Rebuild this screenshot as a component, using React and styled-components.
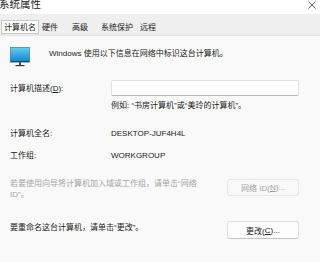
import * as React from 'react';
import styled, { createGlobalStyle } from 'styled-components';

// =====================================
// STYLED COMPONENTS
// =====================================

const GlobalStyle = createGlobalStyle`
  html, body {
    margin: 0;
    padding: 0;
    background: #ffffff;
  }
  body {
    font-family: "Liberation Sans", "Noto Sans CJK SC", sans-serif;
    color: #1b1b1b;
  }
`;

const Window = styled.div`
  display: flex;
  flex-direction: column;
  width: 320px;
  height: 262px;
  overflow: hidden;
  font-size: 8px;
`;

const TitleBar = styled.div`
  display: flex;
  justify-content: space-between;
  align-items: flex-start;
  height: 14px;
  background: #ffffff;
`;

const Title = styled.div`
  font-size: 10.5px;
  line-height: 10px;
  margin-top: -1px;
  margin-left: -1px;
  color: #222;
`;

const CloseButton = styled.div`
  width: 10px;
  height: 10px;
  margin: 0 3px 0 0;
  display: flex;
  align-items: center;
  justify-content: center;
`;

const TabStrip = styled.div`
  display: flex;
  align-items: flex-end;
  height: 21px;
  padding-left: 1px;
  background: #efefef;
`;

const Tab = styled.div`
  box-sizing: border-box;
  height: 14px;
  width: ${p => p.$w}px;
  padding-left: 2px;
  line-height: 13px;
  font-size: 8px;
  color: #1b1b1b;
  background: ${p => (p.$active ? '#ffffff' : 'transparent')};
  border: 1px solid ${p => (p.$active ? '#c8c8c8' : 'transparent')};
  margin-bottom: 1px;
`;

const Panel = styled.div`
  flex: 1;
  display: flex;
  flex-direction: column;
  padding: 11px 21px 0 10px;
  background: #f9f9f9;
  border-top: 1px solid #e3e3e3;
`;

const Intro = styled.div`
  display: flex;
  align-items: flex-start;
  height: 20px;
`;

const IntroText = styled.div`
  margin: 1px 0 0 19px;
  line-height: 11px;
`;

const Row = styled.div`
  display: flex;
  align-items: center;
  margin-top: ${p => p.$top}px;
  line-height: 11px;
`;

const Label = styled.div`
  width: 101px;
  flex-shrink: 0;
`;

const Input = styled.div`
  box-sizing: border-box;
  width: 189px;
  height: 16px;
  background: #ffffff;
  border: 1px solid #e2e2e2;
  border-bottom-color: #b9b9b9;
  border-radius: 2px;
`;

const Hint = styled.div`
  margin: 4px 0 0 101px;
  line-height: 11px;
`;

const ActionRow = styled.div`
  display: flex;
  justify-content: space-between;
  align-items: flex-start;
  margin-top: ${p => p.$top}px;
`;

const ActionText = styled.div`
  line-height: 11px;
  padding-top: ${p => p.$pad || 0}px;
  color: ${p => (p.$muted ? '#a6a6a6' : '#1b1b1b')};
`;

const Button = styled.div`
  box-sizing: border-box;
  width: 72px;
  height: ${p => p.$h}px;
  display: flex;
  align-items: center;
  justify-content: center;
  margin-top: ${p => p.$top || 0}px;
  border-radius: 3px;
  font-size: 8px;
  background: ${p => (p.$disabled ? '#f9f9f9' : '#fdfdfd')};
  color: ${p => (p.$disabled ? '#9e9e9e' : '#1b1b1b')};
  border: 1px solid ${p => (p.$disabled ? '#e6e6e6' : '#e0e0e0')};
  border-bottom-color: ${p => (p.$disabled ? '#e6e6e6' : '#c4c4c4')};
`;

const Key = styled.span`
  text-decoration: underline;
`;

// ==========================================

const MonitorIcon = () => (
  <svg width="20" height="20" viewBox="0 0 20 20">
    <defs>
      <linearGradient id="scr" x1="0" y1="0" x2="0" y2="1">
        <stop offset="0" stopColor="#5fd0f3" />
        <stop offset="1" stopColor="#1283c8" />
      </linearGradient>
    </defs>
    <rect x="0.5" y="0.5" width="19" height="14.5" fill="url(#scr)" stroke="#1c6aa0" strokeWidth="0.6" />
    <rect x="0.3" y="14.2" width="19.4" height="1" fill="#20405a" />
    <rect x="9" y="15.2" width="2" height="3" fill="#4a4a4a" />
    <rect x="5.5" y="18" width="9" height="1.2" fill="#3a3a3a" />
  </svg>
);

const CloseIcon = () => (
  <svg width="8" height="8" viewBox="0 0 8 8">
    <path d="M0.5 0.5 L7.5 7.5 M7.5 0.5 L0.5 7.5" stroke="#333" strokeWidth="0.8" />
  </svg>
);

const tabs = [
  { name: '计算机名', w: 38, active: true },
  { name: '硬件', w: 30 },
  { name: '高级', w: 29 },
  { name: '系统保护', w: 39 },
  { name: '远程', w: 30 },
];

const App = () => {
  return (
    <Window>
      <GlobalStyle />
      <TitleBar>
        <Title>系统属性</Title>
        <CloseButton><CloseIcon /></CloseButton>
      </TitleBar>
      <TabStrip>
        {tabs.map(t => (
          <Tab key={t.name} $w={t.w} $active={t.active}>{t.name}</Tab>
        ))}
      </TabStrip>
      <Panel>
        <Intro>
          <MonitorIcon />
          <IntroText>Windows 使用以下信息在网络中标识这台计算机。</IntroText>
        </Intro>
        <Row $top={13}>
          <Label>计算机描述(<Key>D</Key>):</Label>
          <Input />
        </Row>
        <Hint>例如: “书房计算机”或“美玲的计算机”。</Hint>
        <Row $top={17}>
          <Label>计算机全名:</Label>
          <div>DESKTOP-JUF4H4L</div>
        </Row>
        <Row $top={11}>
          <Label>工作组:</Label>
          <div>WORKGROUP</div>
        </Row>
        <ActionRow $top={17}>
          <ActionText $muted>若要使用向导将计算机加入域或工作组，请单击“网络<br />ID”。</ActionText>
          <Button $h={17} $top={1} $disabled>网络 ID(<Key>N</Key>)...</Button>
        </ActionRow>
        <ActionRow $top={21}>
          <ActionText $pad={1}>要重命名这台计算机，请单击“更改”。</ActionText>
          <Button $h={18}>更改(<Key>C</Key>)...</Button>
        </ActionRow>
      </Panel>
    </Window>
  );
};

export default App;
